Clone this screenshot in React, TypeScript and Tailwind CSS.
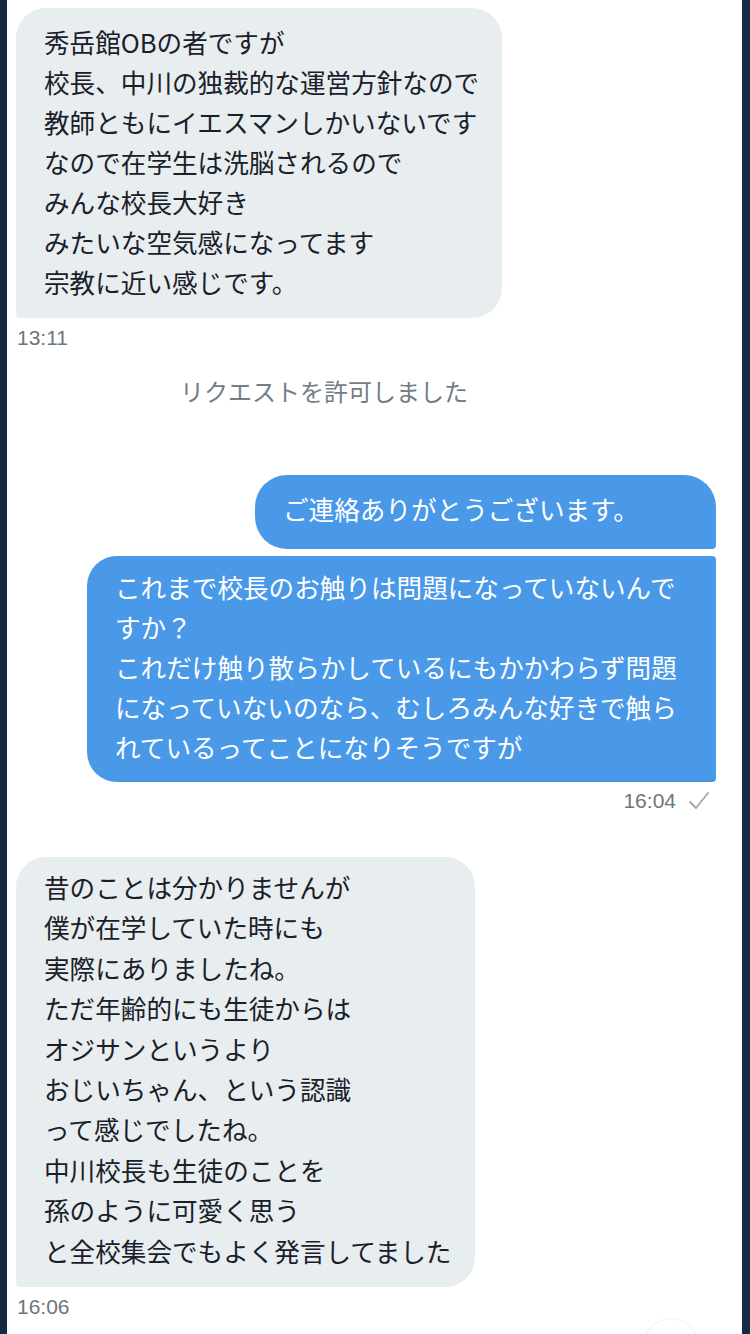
import React from 'react';

const FONT = { fontFamily: '"Noto Sans CJK JP", "Noto Sans", sans-serif' };
const TIME_FONT = { fontFamily: '"Liberation Sans", Arial, sans-serif' };

const received1 = [
  '秀岳館OBの者ですが',
  '校長、中川の独裁的な運営方針なので',
  '教師ともにイエスマンしかいないです',
  'なので在学生は洗脳されるので',
  'みんな校長大好き',
  'みたいな空気感になってます',
  '宗教に近い感じです。',
];

const sent2 = [
  'これまで校長のお触りは問題になっていないんで',
  'すか？',
  'これだけ触り散らかしているにもかかわらず問題',
  'になっていないのなら、むしろみんな好きで触ら',
  'れているってことになりそうですが',
];

const received2 = [
  '昔のことは分かりませんが',
  '僕が在学していた時にも',
  '実際にありましたね。',
  'ただ年齢的にも生徒からは',
  'オジサンというより',
  'おじいちゃん、という認識',
  'って感じでしたね。',
  '中川校長も生徒のことを',
  '孫のように可愛く思う',
  'と全校集会でもよく発言してました',
];

const Lines: React.FC<{ lines: string[] }> = ({ lines }) => (
  <>
    {lines.map((l, i) => (
      <div key={i} className="whitespace-nowrap">
        {l}
      </div>
    ))}
  </>
);

export default function App() {
  return (
    <div className="flex w-[750px] h-[1334px] overflow-hidden bg-[#142b40]" style={FONT}>
      <div className="w-[7px] shrink-0" />
      <div className="relative flex-1 bg-white flex flex-col">
        {/* first received message */}
        <div className="mt-[8px] ml-[9px] w-[486px] rounded-[30px] rounded-bl-[4px] bg-[#e8edf0] pl-[28px] pt-[14px] pb-[16px] text-[25.6px] leading-[40px] text-[#1a2029]">
          <Lines lines={received1} />
        </div>
        <div className="mt-[8px] ml-[10px] text-[21px] leading-[24px] text-[#6b7680]" style={TIME_FONT}>13:11</div>

        {/* system note */}
        <div className="mt-[26px] pl-[173px] text-[24px] leading-[30px] text-[#737d86]">
          リクエストを許可しました
        </div>

        {/* sent messages */}
        <div className="mt-[69px] flex flex-col items-end gap-[7px] pr-[26px]">
          <div className="w-[461px] rounded-[32px] rounded-br-[4px] bg-[#4a98e8] pl-[28px] pt-[14px] pb-[20px] text-[25.6px] leading-[40px] text-white">
            ご連絡ありがとうございます。
          </div>
          <div className="w-[629px] rounded-[30px] rounded-tr-[4px] rounded-br-[4px] bg-[#4a98e8] pl-[28px] pt-[11px] pb-[15px] text-[25.6px] leading-[40px] text-white">
            <Lines lines={sent2} />
          </div>
        </div>
        <div className="mt-[7px] flex items-center justify-end pr-[32px] gap-[12px]">
          <span className="text-[21px] leading-[24px] text-[#6b7680]" style={TIME_FONT}>16:04</span>
          <svg width="22" height="20" viewBox="0 0 22 20" fill="none">
            <path d="M2 11 L8 17 L20 2" stroke="#a3abb2" strokeWidth="2" strokeLinecap="round" strokeLinejoin="round" />
          </svg>
        </div>

        {/* second received message */}
        <div className="mt-[44px] ml-[9px] w-[459px] rounded-[30px] rounded-bl-[4px] bg-[#e8edf0] pl-[28px] pt-[10px] pb-[16px] text-[25.6px] leading-[40.4px] text-[#1a2029]">
          <Lines lines={received2} />
        </div>
        <div className="mt-[8px] ml-[10px] text-[21px] leading-[24px] text-[#6b7680]" style={TIME_FONT}>16:06</div>

        <div className="absolute left-[636px] top-[1318px] w-[56px] h-[56px] rounded-full border border-[#eef0f2]" />
      </div>
      <div className="w-[8px] shrink-0" />
    </div>
  );
}
